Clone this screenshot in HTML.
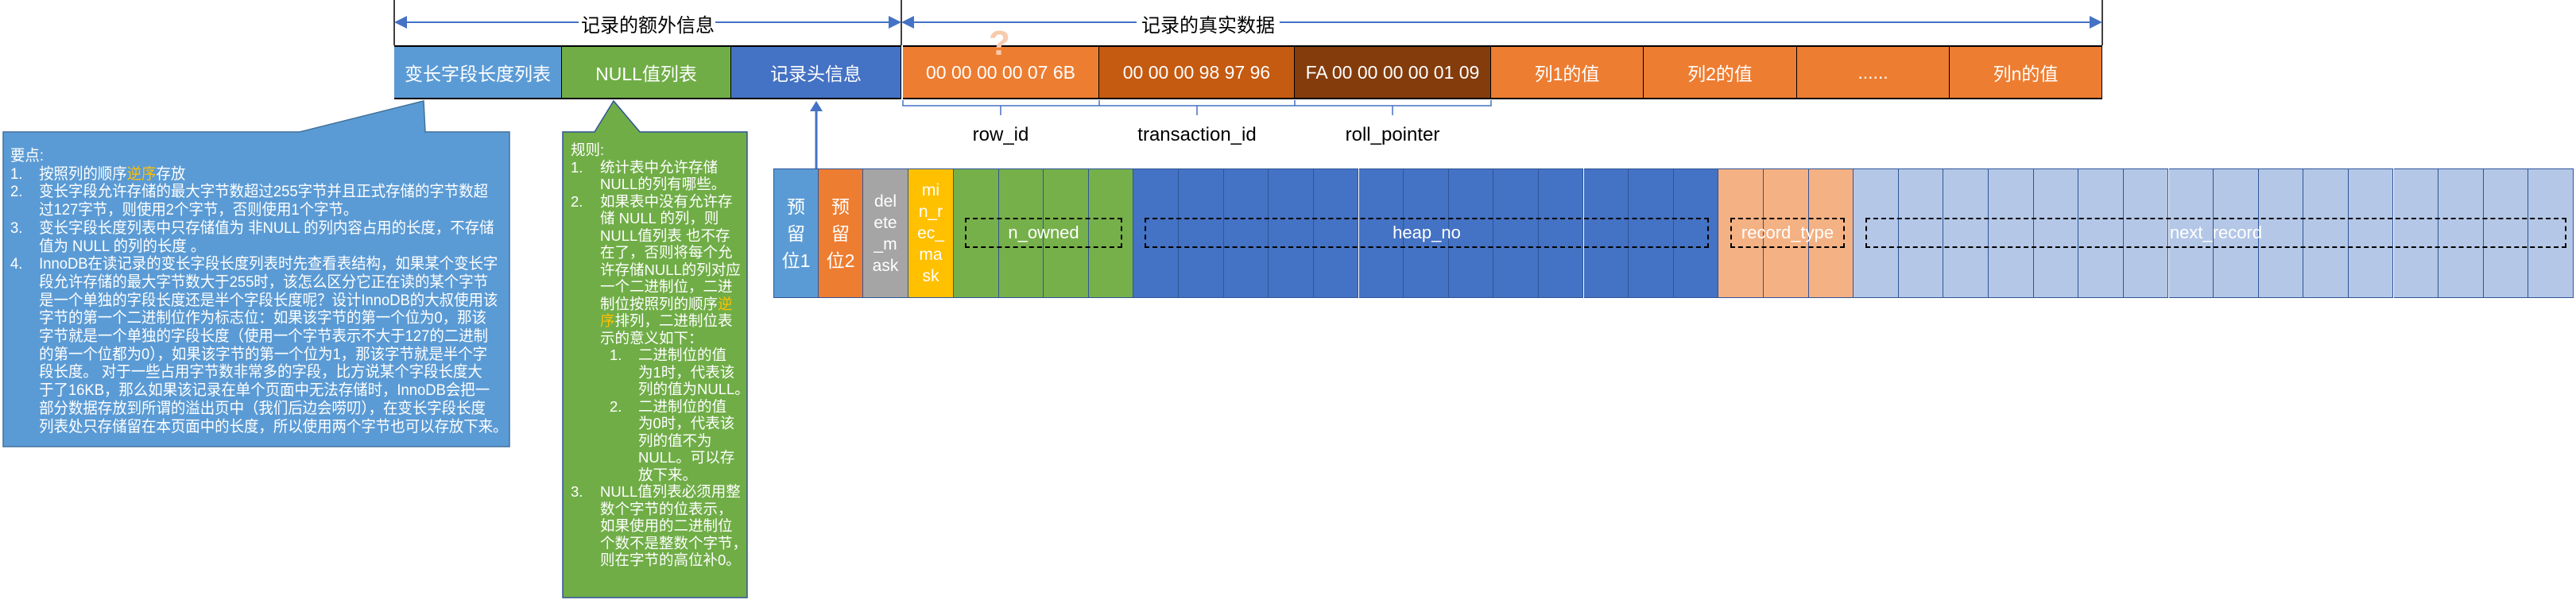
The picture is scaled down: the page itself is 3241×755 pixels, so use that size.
<!DOCTYPE html>
<html><head><meta charset="utf-8">
<style>
*{margin:0;padding:0;box-sizing:border-box}
body{width:3241px;height:755px;background:#fff;position:relative;overflow:hidden;font-family:"Liberation Sans","Noto Sans CJK SC",sans-serif}
.a{position:absolute}
.box{position:absolute;top:57px;height:68px;border-top:2px solid #000;border-bottom:2px solid #000;border-right:1px solid #000;color:#fff;font-size:23px;display:flex;align-items:center;justify-content:center;white-space:nowrap}
.cell{position:absolute;top:212px;height:163px;border:1px solid #2f5597;border-left:none;color:#fff;font-size:21px;display:flex;align-items:center;justify-content:center;text-align:center;line-height:27px}
.dash{position:absolute;top:274px;height:38px;border:2px dashed #000;color:#fff;font-size:22px;display:flex;align-items:center;justify-content:center}
.lbl{position:absolute;top:156px;font-size:24px;color:#000;transform:translateX(-50%);white-space:nowrap}
.t1{position:absolute;left:13px;top:185px;color:#fff;font-size:19.4px;line-height:22.7px;white-space:nowrap;transform:scaleX(0.95);transform-origin:0 0}
.t1 span.n{display:inline-block;width:38px}
.t1 .i{padding-left:38px}
.t2{position:absolute;left:718px;top:178px;color:#fff;font-size:18.5px;line-height:21.5px;white-space:nowrap}
.y{color:#ffc000}
</style></head><body>
<svg class="a" style="left:0;top:0" width="3241" height="755">
<defs><marker id="ar" markerWidth="8" markerHeight="8" refX="7" refY="4" orient="auto"><path d="M0,0 L8,4 L0,8z" fill="#4472c4"/></marker></defs>
<line x1="496" y1="0" x2="496" y2="57" stroke="#000" stroke-width="1.5"/>
<line x1="1134" y1="0" x2="1134" y2="57" stroke="#000" stroke-width="1.5"/>
<line x1="2645" y1="0" x2="2645" y2="57" stroke="#000" stroke-width="1.5"/>
<line x1="728" y1="28" x2="498" y2="28" stroke="#4472c4" stroke-width="2" marker-end="url(#ar)"/>
<line x1="900" y1="28" x2="1132" y2="28" stroke="#4472c4" stroke-width="2" marker-end="url(#ar)"/>
<line x1="1430" y1="28" x2="1136" y2="28" stroke="#4472c4" stroke-width="2" marker-end="url(#ar)"/>
<line x1="1610" y1="28" x2="2643" y2="28" stroke="#4472c4" stroke-width="2" marker-end="url(#ar)"/>
<path d="M1136,126 v7 H1383 v-7 M1259,133 v12 M1383,126 v7 H1629 v-7 M1506,133 v12 M1629,126 v7 H1876 v-7 M1752,133 v12" fill="none" stroke="#4472c4" stroke-width="1.5"/>
<line x1="1027" y1="212" x2="1027" y2="134" stroke="#4472c4" stroke-width="3"/>
<path d="M1019,140 L1027,127 L1035,140z" fill="#4472c4"/>
<path d="M4,166 H377 L533,127 L535,166 H641 V562 H4z" fill="#5b9bd5" stroke="#41719c" stroke-width="1.5"/>
<path d="M708,166 H748 L772,127 L805,166 H940 V752 H708z" fill="#70ad47" stroke="#2f5597" stroke-width="1.5"/>
</svg>
<div class="a" style="left:730px;top:12px;font-size:24px;width:170px;text-align:center">记录的额外信息</div>
<div class="a" style="left:1435px;top:12px;font-size:24px;width:170px;text-align:center">记录的真实数据</div>
<div class="box" style="left:496px;width:211px;background:#5b9bd5">变长字段长度列表</div>
<div class="box" style="left:707px;width:213px;background:#70ad47">NULL值列表</div>
<div class="box" style="left:920px;width:214px;background:#4472c4">记录头信息</div>
<div class="box" style="left:1136px;width:247px;background:#ed7d31">00 00 00 00 07 6B</div>
<div class="box" style="left:1383px;width:246px;background:#c55a11">00 00 00 98 97 96</div>
<div class="box" style="left:1629px;width:247px;background:#843c0c">FA 00 00 00 00 01 09</div>
<div class="box" style="left:1876px;width:192px;background:#ed7d31">列1的值</div>
<div class="box" style="left:2068px;width:193px;background:#ed7d31">列2的值</div>
<div class="box" style="left:2261px;width:192px;background:#ed7d31">......</div>
<div class="box" style="left:2453px;width:192px;background:#ed7d31">列n的值</div>
<div class="a" style="left:1244px;top:30px;font-size:44px;color:#f8cbad;font-weight:bold">?</div>
<div class="lbl" style="left:1259px">row_id</div>
<div class="lbl" style="left:1506px">transaction_id</div>
<div class="lbl" style="left:1752px">roll_pointer</div>
<div id="row"></div>
<div class="cell" style="left:973px;width:57px;background:#5b9bd5;border-left:1px solid #2f5597;font-size:23px;line-height:34px">预<br>留<br>位1</div>
<div class="cell" style="left:1030px;width:56px;background:#ed7d31;font-size:23px;line-height:34px">预<br>留<br>位2</div>
<div class="cell" style="left:1086px;width:57px;background:#a5a5a5">del<br>ete<br>_m<br>ask</div>
<div class="cell" style="left:1143px;width:57px;background:#ffc000">mi<br>n_r<br>ec_<br>ma<br>sk</div>
<script>
var h='',x=1200,w=(3238-1200)/36;
for(var i=0;i<36;i++){var c=i<4?'#76b04a':i<17?'#4472c4':i<20?'#f4b183':'#b4c7e7';
h+='<div class="cell" style="left:'+(x+i*w).toFixed(1)+'px;width:'+w.toFixed(1)+'px;background:'+c+'"></div>';}
document.getElementById('row').innerHTML=h;
</script>
<div class="dash" style="left:1214px;width:198px">n_owned</div>
<div class="dash" style="left:1440px;width:710px">heap_no</div>
<div class="dash" style="left:2177px;width:144px">record_type</div>
<div class="dash" style="left:2347px;width:882px">next_record</div>
<div class="t1">要点:<br>
<span class="n">1.</span>按照列的顺序<span class="y">逆序</span>存放<br>
<span class="n">2.</span>变长字段允许存储的最大字节数超过255字节并且正式存储的字节数超<br>
<div class="i">过127字节，则使用2个字节，否则使用1个字节。</div>
<span class="n">3.</span>变长字段长度列表中只存储值为 非NULL 的列内容占用的长度，不存储<br>
<div class="i">值为 NULL 的列的长度 。</div>
<span class="n">4.</span>InnoDB在读记录的变长字段长度列表时先查看表结构，如果某个变长字<br>
<div class="i">段允许存储的最大字节数大于255时，该怎么区分它正在读的某个字节<br>是一个单独的字段长度还是半个字段长度呢？设计InnoDB的大叔使用该<br>字节的第一个二进制位作为标志位：如果该字节的第一个位为0，那该<br>字节就是一个单独的字段长度（使用一个字节表示不大于127的二进制<br>的第一个位都为0），如果该字节的第一个位为1，那该字节就是半个字<br>段长度。 对于一些占用字节数非常多的字段，比方说某个字段长度大<br>于了16KB，那么如果该记录在单个页面中无法存储时，InnoDB会把一<br>部分数据存放到所谓的溢出页中（我们后边会唠叨），在变长字段长度<br>列表处只存储留在本页面中的长度，所以使用两个字节也可以存放下来。</div>
</div>
<div class="t2">规则:<br>
<span style="display:inline-block;width:37px">1.</span>统计表中允许存储<br>
<div style="padding-left:37px">NULL的列有哪些。</div>
<span style="display:inline-block;width:37px">2.</span>如果表中没有允许存<br>
<div style="padding-left:37px">储 NULL 的列，则<br>NULL值列表 也不存<br>在了，否则将每个允<br>许存储NULL的列对应<br>一个二进制位，二进<br>制位按照列的顺序<span class="y">逆</span><br><span class="y">序</span>排列，二进制位表<br>示的意义如下：</div>
<div style="padding-left:49px"><span style="display:inline-block;width:36px">1.</span>二进制位的值<br>
<div style="padding-left:36px">为1时，代表该<br>列的值为NULL。</div>
<span style="display:inline-block;width:36px">2.</span>二进制位的值<br>
<div style="padding-left:36px">为0时，代表该<br>列的值不为<br>NULL。可以存<br>放下来。</div></div>
<span style="display:inline-block;width:37px">3.</span>NULL值列表必须用整<br>
<div style="padding-left:37px">数个字节的位表示，<br>如果使用的二进制位<br>个数不是整数个字节，<br>则在字节的高位补0。</div>
</div>
</body></html>
